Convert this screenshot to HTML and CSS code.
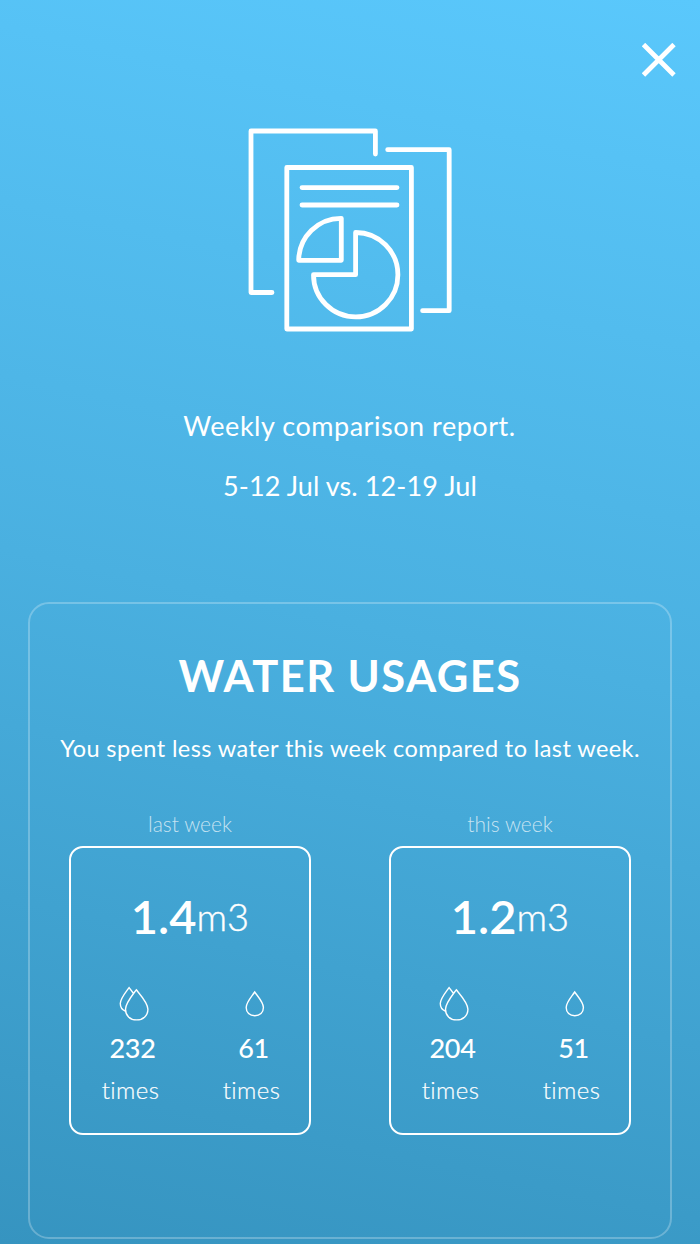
FILE: index.html
```html
<!DOCTYPE html>
<html lang="en">
<head>
<meta charset="utf-8">
<title>Weekly comparison report</title>
<link rel="stylesheet" href="styles.css">
</head>
<body>
<main class="screen">
  <header class="topbar">
    <button class="close" aria-label="Close">
      <svg width="34" height="34" viewBox="0 0 34 34"><path d="M1.5 1.5 32 32M32 1.5 1.5 32"/></svg>
    </button>
  </header>
  <section class="intro">
    <svg class="report-icon" width="204" height="204" viewBox="248 128 204 204">
      <path d="M272 292.5H251V131H375.4V154"/>
      <path d="M387.7 149.7H449.2V310.7H422.6"/>
      <path d="M286.8 167.5H411.4V329H286.8Z"/>
      <path d="M302 187.6H397M302 205H397"/>
      <path d="M341.3 218.3V260.3H298.7A42.3 42.3 0 0 1 341.3 218.3Z"/>
      <path d="M355.6 232.5V274.7H313.5A42.2 42.2 0 1 0 355.6 232.5Z"/>
    </svg>
    <p class="line line-title">Weekly comparison report.</p>
    <p class="line line-dates">5-12 Jul vs. 12-19 Jul</p>
  </section>
  <section class="card">
    <h1 class="heading">WATER USAGES</h1>
    <p class="summary">You spent less water this week compared to last week.</p>
    <div class="weeks">
      <article class="week">
        <h2 class="week-label">last week</h2>
        <div class="box">
          <div class="amount"><b>1.4</b><span class="unit">m3</span></div>
          <div class="stats">
            <div class="stat">
              <svg class="drop" width="40" height="36" viewBox="111 986 40 36"><path d="M136.3 989.8C132.5 995 125.5 1003 125.5 1009.2C125.5 1015.5 130 1019.9 136.6 1019.9S147.9 1015.5 147.9 1009.2C147.9 1003 140.5 995 136.3 989.8ZM133.4 993.2 129.1 987.6C126 992 120.3 998.5 120.3 1003.6C120.3 1007.5 122.2 1009.9 125.2 1011.2"/></svg>
              <strong>232</strong><em>times</em>
            </div>
            <div class="stat">
              <svg class="drop" width="40" height="36" viewBox="232 986 40 36"><path d="M254.7 992C251.7 996.5 246.2 1002.3 246.2 1007.4C246.2 1012.5 249.7 1015.8 254.8 1015.8S263.4 1012.5 263.4 1007.4C263.4 1002.3 257.9 996.5 254.7 992Z"/></svg>
              <strong>61</strong><em>times</em>
            </div>
          </div>
        </div>
      </article>
      <article class="week">
        <h2 class="week-label">this week</h2>
        <div class="box">
          <div class="amount"><b>1.2</b><span class="unit">m3</span></div>
          <div class="stats">
            <div class="stat">
              <svg class="drop" width="40" height="36" viewBox="111 986 40 36"><path d="M136.3 989.8C132.5 995 125.5 1003 125.5 1009.2C125.5 1015.5 130 1019.9 136.6 1019.9S147.9 1015.5 147.9 1009.2C147.9 1003 140.5 995 136.3 989.8ZM133.4 993.2 129.1 987.6C126 992 120.3 998.5 120.3 1003.6C120.3 1007.5 122.2 1009.9 125.2 1011.2"/></svg>
              <strong>204</strong><em>times</em>
            </div>
            <div class="stat">
              <svg class="drop" width="40" height="36" viewBox="232 986 40 36"><path d="M254.7 992C251.7 996.5 246.2 1002.3 246.2 1007.4C246.2 1012.5 249.7 1015.8 254.8 1015.8S263.4 1012.5 263.4 1007.4C263.4 1002.3 257.9 996.5 254.7 992Z"/></svg>
              <strong>51</strong><em>times</em>
            </div>
          </div>
        </div>
      </article>
    </div>
  </section>
</main>
</body>
</html>
```
FILE: styles.css
```css
* { box-sizing: border-box; margin: 0; padding: 0; }
body { font-family: Lato, "Open Sans", sans-serif; color: #fff; }
svg { display: block; fill: none; stroke: #fff; }
.screen {
  height: 1244px;
  overflow: hidden;
  padding: 43px 28px 0;
  background: linear-gradient(192deg, #5ac8fc 0%, #4ab0e0 50%, #3694c0 100%);
}
.topbar { display: flex; justify-content: flex-end; height: 34px; margin-right: -4px; }
.close { background: none; border: 0; width: 34px; height: 34px; }
.close svg { stroke-width: 4.8; }
.intro { display: flex; flex-direction: column; align-items: center; padding-top: 51px; }
.report-icon { stroke-width: 4.8; stroke-linecap: round; stroke-linejoin: round; margin-bottom: 64px; }
.line { font-size: 27px; line-height: 59px; white-space: nowrap; }
.line-title { letter-spacing: 0.53px; padding-right: 1px; }
.line-dates { letter-spacing: 0.1px; margin-top: 1px; }
.card {
  margin-top: 87px;
  height: 637px;
  border: 2px solid rgba(255, 255, 255, .25);
  border-radius: 21px;
  padding: 41px 39px 0;
  text-align: center;
}
.heading { font-size: 43.5px; line-height: 60px; font-weight: 700; letter-spacing: 1.45px; white-space: nowrap; }
.summary {
  display: flex;
  justify-content: center;
  margin-top: 28px;
  font-size: 23.5px;
  line-height: 30px;
  letter-spacing: 0.41px;
  white-space: nowrap;
}
.weeks { display: flex; justify-content: space-between; margin-top: 49px; }
.week { width: 242px; }
.week-label {
  font-size: 21px;
  line-height: 24px;
  font-weight: 300;
  color: rgba(255, 255, 255, .7);
  margin-bottom: 10px;
}
.box { height: 289px; border: 2px solid #fff; border-radius: 14px; padding-top: 38px; }
.amount { display: flex; justify-content: center; height: 60px; line-height: 60px; }
.amount b { font-size: 47px; font-weight: 600; }
.unit { font-size: 38px; font-weight: 300; -webkit-text-stroke: .4px #fff; }
.stats { display: flex; gap: 2px; margin-top: 40px; }
.stat { width: 119px; flex: none; display: flex; flex-direction: column; align-items: center; }
.drop { stroke-width: 1.4; }
.stat strong {
  font-size: 27px;
  font-weight: 500;
  line-height: 40px;
  letter-spacing: -0.4px;
  margin-top: 6px;
  padding-left: 4px;
}
.stat em {
  font-style: normal;
  font-size: 24px;
  font-weight: 300;
  line-height: 40px;
  letter-spacing: 0.4px;
  margin-top: 2px;
  -webkit-text-stroke: .2px #fff;
}
```
